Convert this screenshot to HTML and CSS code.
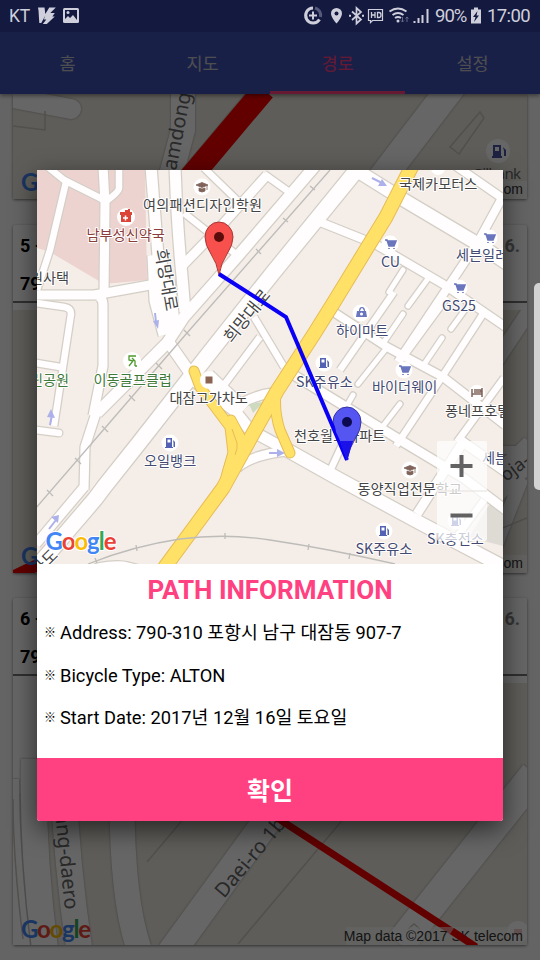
FILE: index.html
```html
<!DOCTYPE html>
<html lang="ko">
<head>
<meta charset="utf-8">
<title>Path information</title>
<link rel="stylesheet" href="styles.css">
</head>
<body>
<div class="screen">
  <header class="status">
    <div class="status-side">
      <span class="carrier">KT</span>
      <svg class="ic-left" width="46" height="32" viewBox="36 0 46 32">
        <path d="M38 7.500h6.500l.8 6.500 4-6.500h6.500l-5.500 5.500h4.500l-2.500 3.500h2.500l-8 7.500h-4l3.500-4.500h-2.500l1.500-4-4 7.500h-2l-.8-12.500z" fill="#cfcfdc"/>
        <rect x="63" y="8" width="16" height="15" rx="1.500" fill="#cfcfdc"/>
        <path d="M65 10h12v10l-4-5-3 3-2-2-3 3z" fill="#13193f"/>
        <circle cx="68" cy="12.500" r="1.500" fill="#cfcfdc"/>
      </svg>
    </div>
    <div class="status-side">
      <svg width="132" height="32" viewBox="300 0 132 32" fill="none" stroke="#cfcfdc">
        <path d="M313 8a7.500 7.500 0 1 0 6.500 11.500" stroke-width="3"/>
        <path d="M315 8a7.500 7.500 0 0 1 5.500 9" stroke="#55597c" stroke-width="3"/>
        <path d="M309 15.500h8M313 11.500v8" stroke-width="2"/>
        <path d="M336.500 8a5.500 5.500 0 0 1 5.500 5.500c0 4-5.500 10-5.500 10s-5.500-6-5.500-10a5.500 5.500 0 0 1 5.500-5.500z" fill="#cfcfdc" stroke="none"/>
        <circle cx="336.500" cy="13.500" r="2" fill="#13193f" stroke="none"/>
        <path d="M352 11.500l9 8-4.500 4v-15.500l4.500 4-9 8" stroke-width="1.700"/>
        <path d="M349 15.800h2M362 15.800h2" stroke-width="2"/>
        <path d="M368.500 9.500h14v11h-10l-2 2v-2h-2z" stroke-width="1.200"/>
        <path d="M371.500 12v6M375 12v6M371.500 15h3.500M377.500 12.500v5h1.500q2 0 2-2.500t-2-2.500z" stroke-width="1.300"/>
        <path d="M389.500 11.500q8.500-6 17 0M392.500 15q5.500-4 11 0M395 18q3-2 6 0" stroke-width="2"/>
        <circle cx="398" cy="21" r="1.500" fill="#cfcfdc" stroke="none"/>
        <path d="M402.500 17v5m-1.500-1.500l1.500 1.500 1.500-1.500M407 22v-5m-1.500 1.500l1.500-1.500 1.500 1.500" stroke="#666a8a" stroke-width="1"/>
        <path d="M414.500 21v2M418.500 18v5M422.500 15v8M427.500 9v14" stroke-width="2"/>
      </svg>
      <span class="pct">90%</span>
      <svg class="ic-batt" width="12" height="32" viewBox="470 0 12 32">
        <path d="M474 7.500h4v2h3v14h-10v-14h3z" fill="#cfcfdc"/>
        <path d="M477.500 11l-4.500 6h2.500l-1.500 5 5-6.500h-2.500z" fill="#13193f"/>
      </svg>
      <span class="clock">17:00</span>
    </div>
  </header>

  <main class="app">
    <nav class="tabs">
      <span class="tab">홈</span>
      <span class="tab">지도</span>
      <span class="tab active">경로</span>
      <span class="tab">설정</span>
    </nav>
    <section class="list">
      <article class="card first">
        <svg class="cardmap" width="514" height="105" viewBox="13 94 514 105">
          <rect x="13" y="94" width="514" height="105" fill="#ece8df"/>
          <g class="bgroad">
            <path d="M13 98l58 11" stroke-width="20" stroke-linecap="round"/>
            <path d="M183 90v40l-20 75" stroke-width="24"/>
            <path d="M453 85L382 178" stroke-width="28"/>
          </g>
          <path d="M13 126l32 4V111M480 112l-30 35 9 7 25-36zM245 94l-80 96" class="thin"/>
          <path d="M264 90L184 185" stroke="#f40000" stroke-width="23"/>
          <text class="road" transform="translate(175 176) rotate(-79)" font-size="20">jamdong</text>
          <circle cx="498" cy="151" r="12" fill="#fff"/>
          <path d="M493 145h8v11h1v2h-10v-2h1zm2 2v4h4v-4zm8 0l3 3v6h-2v-5z" fill="#4a55a5"/>
          <text class="road" x="472" y="179" font-size="15" textLength="49">Gilbank</text>
          <rect x="346" y="181" width="181" height="18" fill="#fff" opacity=".55"/>
          <text class="attr" x="523" y="194" text-anchor="end">Map data ©2017 SK telecom</text>
          <text class="logo" x="21" y="191" textLength="70"><tspan fill="#4285f4">G</tspan><tspan fill="#ea4335">o</tspan><tspan fill="#fbbc05">o</tspan><tspan fill="#4285f4">g</tspan><tspan fill="#34a853">l</tspan><tspan fill="#ea4335">e</tspan></text>
        </svg>
      </article>

      <article class="card">
        <div class="head">
          <div class="row"><b>5 -</b><b class="date">16.</b></div>
          <div class="row"><b>790</b></div>
        </div>
        <svg class="cardmap" width="514" height="263" viewBox="13 310 514 263">
          <rect x="13" y="310" width="514" height="263" fill="#ece8df"/>
          <g class="bgroad">
            <path d="M534 304L470 400" stroke-width="15"/>
            <path d="M480 450h40q10 0 10-10" stroke-width="8"/>
            <path d="M535 448L440 540" stroke-width="30"/>
            <path d="M522 478L490 560" stroke-width="14"/>
          </g>
          <path d="M490 533q20-8 37-15" class="thin"/>
          <text class="road" transform="translate(506 482) rotate(-37)" font-size="18">oja-</text>
          <path d="M10 578l34-16" stroke="#f40000" stroke-width="12"/>
          <rect x="346" y="555" width="181" height="18" fill="#fff" opacity=".6"/>
          <text class="attr" x="523" y="568" text-anchor="end">Map data ©2017 SK telecom</text>
          <text class="logo" x="21" y="565" textLength="70"><tspan fill="#4285f4">G</tspan><tspan fill="#ea4335">o</tspan><tspan fill="#fbbc05">o</tspan><tspan fill="#4285f4">g</tspan><tspan fill="#34a853">l</tspan><tspan fill="#ea4335">e</tspan></text>
        </svg>
      </article>

      <article class="card">
        <div class="head">
          <div class="row"><b>6 -</b><b class="date">16.</b></div>
          <div class="row"><b>790</b></div>
        </div>
        <svg class="cardmap" width="514" height="262" viewBox="13 684 514 262">
          <rect x="13" y="684" width="514" height="262" fill="#ece8df"/>
          <path d="M13 684h24v70l-8 40H13z" fill="#fff"/>
          <g class="bgroad">
            <path d="M8 780q0 80 12 175" stroke-width="22"/>
            <path d="M34 760q-2 90 11 190" stroke-width="26"/>
            <path d="M63 780q4 90 17 175" stroke-width="26"/>
            <path d="M122 800q0 100 17 150" stroke-width="25"/>
            <path d="M290 790L170 955" stroke-width="28"/>
            <path d="M535 775L400 945" stroke-width="30"/>
          </g>
          <path d="M185 818l-38 45M345 818L238 945M13 800q0 60 10 140" class="thin"/>
          <text class="road" transform="translate(53 796) rotate(84)" font-size="20">mang-daero</text>
          <text class="road" transform="translate(224 900) rotate(-50)" font-size="20">Daei-ro 1beon</text>
          <path d="M265 811L476 948" stroke="#f40000" stroke-width="7"/>
          <circle cx="518" cy="933" r="11" fill="#fff"/><path d="M514 930h8v6h-8z" fill="#d88"/>
          <path d="M408 930l6-5 6 5" class="thin"/>
          <rect x="346" y="928" width="181" height="18" fill="#fff" opacity=".55"/>
          <text class="attr" x="523" y="942" text-anchor="end">Map data ©2017 SK telecom</text>
          <path d="M452 932L476 948" stroke="#f40000" stroke-width="7"/>
          <text class="logo" x="21" y="939" textLength="70"><tspan fill="#4285f4">G</tspan><tspan fill="#ea4335">o</tspan><tspan fill="#fbbc05">o</tspan><tspan fill="#4285f4">g</tspan><tspan fill="#34a853">l</tspan><tspan fill="#ea4335">e</tspan></text>
        </svg>
      </article>
    </section>
  </main>

  <div class="scrim">
    <div class="dialog">
      <svg class="map" width="466" height="394" viewBox="37 170 466 394">
        <defs>
          <g id="roads" fill="none" stroke-linejoin="round">
            <path class="w7" d="M48 167L64 180 104 200M119 168v20q0 4-14 14M66 182L50 250 37 290"/>
            <path class="w9" d="M103 166l2 37-1 90M36 295l58 0 12-2 44-8"/>
            <path class="w12" d="M151 166l7 90M175 166q2 60 7 110l3 36"/>
            <path class="w20" d="M157 255l2 45 9 34"/>
            <path class="w14" d="M168 280l6 50"/>
            <path class="w9" d="M183 265l39-40 45-50"/>
            <path class="w7" d="M184 213l53 42M204 168l37 36M264 174l28 20"/>
            <path class="w12" d="M315 166L237 257 184 317 167 343 97 413"/>
            <path class="w9" d="M97 410L85 447 84 490M97 296q6 1 6 10l0 60-10 50M84 487L36 544"/>
            <path class="w16" d="M360 166L272 274 207 356 139 443 104 487 95 499 36 568"/>
            <path class="w7" d="M36 303l28 4q7 1 7 7L54 426M36 363l24 4"/>
            <path class="w7 rd" d="M36 430l23 3"/>
            <path class="w12" d="M167 340l30 43 37 27 16 20 37 20"/>
            <path class="w20" d="M206 378l36 34"/>
            <path class="w14" d="M280 446l57 32 83 45 84 44M356 170l48 30 74 44 30 20"/>
            <path class="w7" d="M254 317l30 50M260 337l-36 48"/>
            <path class="w9" d="M240 404q16-9 32-11M237 468q14-13 50-17M284 367l13 10 72 44 36 22 60 36 42 32"/>
            <path class="w8" d="M320 222l55 22 68 40 70 48M456 166l46 32-24 44-80 120M332 311l55 36 56 30 62 48"/>
            <path class="w7" d="M447 297l-44 60M483 314l-43 66-44 66M394 292l-54 78M504 378l-47 64M343 443l-13 28M484 500l-28 38"/>
            <path class="w9" d="M463 442l-46 72M460 440l46 32"/>
            <path class="w6 rd" d="M385 350l-27 34M403 314l-19 28M442 338l-19 28M427 280l-19 26M467 307l-16 22M400 404l-20 26M353 395l-8 14M403 270l-14 22"/>
            <path class="w9 rd" d="M98 568q20-4 30-1l30 8"/>
          </g>
          <g id="highways" fill="none" stroke-linejoin="round" stroke-linecap="round">
            <path class="w14" d="M414 162L386 217 334 302 314 334 277 391 250 439 223 488 165 567"/>
            <path class="w9" d="M194 371l6 16 30 40 3 26-9 31M231 420l14 26M276 392q-2 20 4 38l10 23"/>
            <path class="w14" d="M238 444l-9 30"/>
          </g>
          <g id="cart"><circle r="8.500" fill="#fff"/><path d="M-5-4h2l2 6h5l2-5H-2M-1 4v1M4 4v1" fill="#6975bd" stroke="#6975bd" stroke-width="1.600"/></g>
          <g id="fuel"><circle r="8.500" fill="#fff"/><path d="M-4-5h6v9h1v1h-8V4h1zm1.500 1.500v3h3v-3zM3-3l2 2v5H3.500V0z" fill="#5362b2"/></g>
          <g id="school"><circle r="8.500" fill="#fff"/><path d="M-6-2l6-2.500L6-2 0 .5zM-3 1l3 1 3-1v3q-3 2-6 0zM5-2v5" fill="#80645c" stroke="#80645c" stroke-width=".8"/></g>
        </defs>
        <rect x="37" y="170" width="466" height="394" fill="#f5ede7"/>
        <path d="M37 170h108l2 110-43 4-54-32-13-4z" fill="#ecd3d0"/>
        <path d="M489 505l14 2v39l-34-9z" fill="#dedbd5"/>
        <use href="#roads" class="casing"/>
        <use href="#roads" class="fill"/>
        <path d="M249 404l15-2-11 11z" fill="#cddac0"/>
        <use href="#highways" class="hcasing"/>
        <use href="#highways" class="hfill"/>
        <path d="M232 429l5 14q1 5-2 12" fill="none" stroke="#e6bd55"/>
        <path class="rail" d="M330 170L258 252 187 333 105 428 36 508M88 564q45-18 92-25 45-6 90 1 60 9 125 24"/>
        <path class="rail" d="M310 186l5 4M283 218l5 4M256 249l5 5M184 330l6 6M156 363l6 6M129 395l6 6M102 426l6 6M75 458l6 6M47 490l6 6M136 545l1 6M225 533v6M309 544l-1 6M350 553l-1 6M95 558l2 5"/>
        <g class="arrows"><path d="M372 178l10 5M155 313l1 9M50 425l2-10M49 529l7-9M269 453h9"/><path d="M382 179l5 7-9 0zM153 321l6-1-1 9zM47 417l4-8 4 9zM51 517l8-2-1 8zM277 449l8 4-8 4z"/></g>

        <use href="#school" transform="translate(202 187)"/>
        <circle cx="126" cy="217" r="9" fill="#fff"/>
        <path d="M120 212h5v-2h3v-1h2v3h2v3h-1v7h-10v-7h-1z" fill="#db4437"/><path d="M123 218h5M125.500 215.500v5" stroke="#fff" stroke-width="1.500"/>
        <circle cx="438" cy="168" r="7" fill="#fff"/>
        <use href="#cart" transform="translate(390 244)"/>
        <use href="#cart" transform="translate(489 238)"/>
        <use href="#cart" transform="translate(459 288)"/>
        <use href="#cart" transform="translate(404 370)"/>
        <circle cx="361" cy="313" r="8.500" fill="#fff"/><path d="M356 317l1-6h2q0-4 3-4t3 4h1l1 6zM360 311h4q-1-3-2-3t-2 3" fill="#6975bd"/><circle cx="361.500" cy="314" r="1.500" fill="#fff"/>
        <use href="#fuel" transform="translate(324 363)"/>
        <use href="#fuel" transform="translate(170 443)"/>
        <use href="#fuel" transform="translate(384 531)"/>
        <use href="#fuel" transform="translate(456 521)"/>
        <use href="#school" transform="translate(410 470)"/>
        <circle cx="132" cy="361" r="9" fill="#fff"/><path d="M136 356h-7v4l4 1-4 5M132 358l3 3 0 5M135 366h2" fill="none" stroke="#4f9a2c" stroke-width="1.300"/>
        <circle cx="209" cy="380" r="9" fill="#fff"/><path d="M205.500 376.500h7v7h-7z" fill="#8c6350"/>
        <circle cx="477" cy="393" r="8" fill="#fff"/><path d="M472 389v8M482 388v9M472 394h10M474 390h7v2h-7" fill="none" stroke="#80645c" stroke-width="1.500"/>

        <g class="lbl">
          <text x="143" y="210" textLength="119">여의패션디자인학원</text>
          <text x="86.500" y="240" class="med">남부성신약국</text>
          <text x="399" y="189">국제카모터스</text>
          <text x="30" y="283">원사택</text>
          <text x="381" y="267" class="shop">CU</text>
          <text x="456" y="260" class="shop">세븐일레븐</text>
          <text x="442" y="311" class="shop">GS25</text>
          <text x="336" y="336" class="shop">하이마트</text>
          <text x="296" y="387" class="shop">SK주유소</text>
          <text x="372" y="392" class="shop">바이더웨이</text>
          <text x="445" y="416">퐁네프호텔</text>
          <text x="30" y="385" class="park">린공원</text>
          <text x="93.500" y="385" class="park">이동골프클럽</text>
          <text x="169.500" y="403">대잠고가차도</text>
          <text x="294" y="441">천호월드아파트</text>
          <text x="144" y="466" class="shop">오일뱅크</text>
          <text x="357.500" y="494">동양직업전문학교</text>
          <text x="355.500" y="554" class="shop">SK주유소</text>
          <text x="427" y="544" class="shop">SK충전소</text>
          <text x="482" y="463" class="shop">세븐</text>
          <text transform="translate(155 250) rotate(80)" font-size="17">희망대로</text>
          <text transform="translate(232 344) rotate(-51)" font-size="17">희망대로</text>
          <text transform="translate(38 577) rotate(-45)" font-size="16">가도</text>
        </g>
        <text class="logo halo" x="45.500" y="550" textLength="71"><tspan fill="#4285f4">G</tspan><tspan fill="#ea4335">o</tspan><tspan fill="#fbbc05">o</tspan><tspan fill="#4285f4">g</tspan><tspan fill="#34a853">l</tspan><tspan fill="#ea4335">e</tspan></text>

        <path d="M219 275q-2-12-8-21-6-9-6-17a14 15 0 0 1 28 0q0 8-6 17-6 9-8 21z" fill="#f8504d" stroke="#a63835"/>
        <circle cx="219" cy="237" r="5" fill="#5b0d0b"/>
        <path d="M347 460q-2-12-8-21-6-9-6-17a14 15 0 0 1 28 0q0 8-6 17-6 9-8 21z" fill="#5555f2" stroke="#3434a4"/>
        <path d="M219 274l67 43 61 143" fill="none" stroke="#0a00f5" stroke-width="4"/>
        <path d="M347 460l-6-17q-2-5-5-11l-2-14 12-10 13 8 1 10q-4 8-8 14z" fill="#5555f2"/>
        <path d="M340 441l7 20 6-20z" fill="#1a12e8"/>
        <circle cx="347" cy="422" r="5" fill="#0c0b52"/>
        <rect x="437" y="441" width="50" height="100" rx="2" fill="#fff" opacity=".72"/>
        <path d="M437 491h50" stroke="#e4e0dd"/>
        <path d="M450.500 466h22M461.500 455v22M450.500 515.500h22" stroke="#626262" stroke-width="4"/>
      </svg>
      <div class="info">
        <h1>PATH INFORMATION</h1>
        <p><span class="mark">※</span>Address: 790-310 포항시 남구 대잠동 907-7</p>
        <p><span class="mark">※</span>Bicycle Type: ALTON</p>
        <p><span class="mark">※</span>Start Date: 2017년 12월 16일 토요일</p>
      </div>
      <button class="ok">확인</button>
    </div>
    <div class="edge"></div>
  </div>
</div>
</body>
</html>
```
FILE: styles.css
```css
* { box-sizing: border-box; }
body { margin: 0; font-family: Roboto, "Noto Sans CJK KR", sans-serif; }
.screen { position: relative; width: 540px; height: 960px; overflow: hidden; background: #fafafa; display: flex; flex-direction: column; }

.status { position: relative; z-index: 3; height: 32px; flex: none; background: #13193f; color: #cfcfdc; display: flex; justify-content: space-between; padding: 0 10px 0 9px; font-size: 18px; line-height: 33px; }
.status-side { display: flex; }
.status svg { display: block; }
.carrier { width: 27px; font-size: 17.500px; letter-spacing: -.3px; }
.pct { width: 35px; padding-left: 3px; font-size: 18.500px; letter-spacing: -1px; white-space: nowrap; }
.ic-batt { margin-left: 3px; }
.clock { width: 43px; margin-left: 5px; font-size: 18.500px; letter-spacing: -.6px; }

.app { display: flex; flex-direction: column; }
.tabs { position: relative; z-index: 1; height: 62px; display: grid; grid-template-columns: repeat(4, 1fr); background: #3f51b5; box-shadow: 0 2px 4px rgba(0, 0, 0, .4); }
.tab { display: flex; align-items: center; justify-content: center; color: #c2c2c8; font-size: 17.500px; padding-top: 2px; border-bottom: 3px solid transparent; }
.tab.active { color: #ff4081; border-bottom-color: #ff4081; }

.list { display: flex; flex-direction: column; gap: 25px; padding: 0 13px; }
.card { background: #fff; box-shadow: 0 1px 3px rgba(0, 0, 0, .5); border-radius: 2px; flex: none; }
.first { margin-bottom: 1px; }
.head { height: 78px; margin-bottom: 7px; border-bottom: 2px solid #777; padding: 9px 7px 0; font-size: 18px; }
.row { display: flex; justify-content: space-between; height: 38px; line-height: 24px; }
.date { color: #888; }
.cardmap, .map { display: block; }
.bgroad { fill: none; stroke: #fff; filter: drop-shadow(0 0 1px #999); }
.thin { fill: none; stroke: #cbc7bf; stroke-width: 1.500px; }
.road { font-family: "Noto Sans", sans-serif; fill: #666; }
.attr { font: 14px "Liberation Sans", sans-serif; fill: #333; }
.logo { font: 700 24px Lato, sans-serif; }
.halo { paint-order: stroke; stroke: #fff; stroke-width: 2px; }

.scrim { position: absolute; z-index: 2; inset: 0; background: rgba(0, 0, 0, .6); display: flex; padding: 170px 37px 0; align-items: flex-start; }
.dialog { width: 466px; background: #fff; border-radius: 0 0 3px 3px; box-shadow: 0 8px 26px rgba(0, 0, 0, .6); overflow: hidden; }
.info { height: 194px; padding: 9px 7px 0; }
.info h1 { margin: 0 0 9px; font-size: 26px; line-height: 35px; font-weight: 700; color: #ff4081; text-align: center; }
.info p { display: flex; margin: 0; height: 42.500px; line-height: 32px; font-size: 18.300px; color: #000; white-space: nowrap; }
.mark { width: 16px; font-size: 12px; font-weight: 700; }
.ok { display: block; width: 100%; height: 63px; border: 0; padding: 0 0 2px; background: #ff4081; color: #fff; font: 700 25px "Noto Sans CJK KR", sans-serif; }
.edge { position: absolute; right: 0; top: 283px; width: 6px; height: 207px; border-radius: 5px 0 0 5px; background: #d3d3d3; }

.w6 { stroke-width: calc(5px + var(--edge)); }
.w7 { stroke-width: calc(6.500px + var(--edge)); }
.w8 { stroke-width: calc(8px + var(--edge)); }
.w9 { stroke-width: calc(9px + var(--edge)); }
.w12 { stroke-width: calc(11px + var(--edge)); }
.w14 { stroke-width: calc(13px + var(--edge)); }
.w16 { stroke-width: calc(15px + var(--edge)); }
.w20 { stroke-width: calc(19px + var(--edge)); }
.rd { stroke-linecap: round; }
.casing { --edge: 2.500px; stroke: #d3cfc7; }
.fill { --edge: 0px; stroke: #fffdfd; }
.hcasing { --edge: 2px; stroke: #e6bd55; }
.hfill { --edge: 0px; stroke: #ffe168; }
.rail { fill: none; stroke: #bdbcb9; stroke-width: 1.300px; }
.arrows { fill: #adb1ea; stroke: #adb1ea; stroke-width: 2px; }
.arrows path + path { stroke: none; }
.lbl { font-family: "Noto Sans CJK KR", sans-serif; font-size: 14.200px; fill: #444; paint-order: stroke; stroke: #fff; stroke-width: 2px; stroke-linejoin: round; }
.shop { fill: #444a72; }
.park { fill: #3f7a3b; }
.med { fill: #8a3d3a; }
```
